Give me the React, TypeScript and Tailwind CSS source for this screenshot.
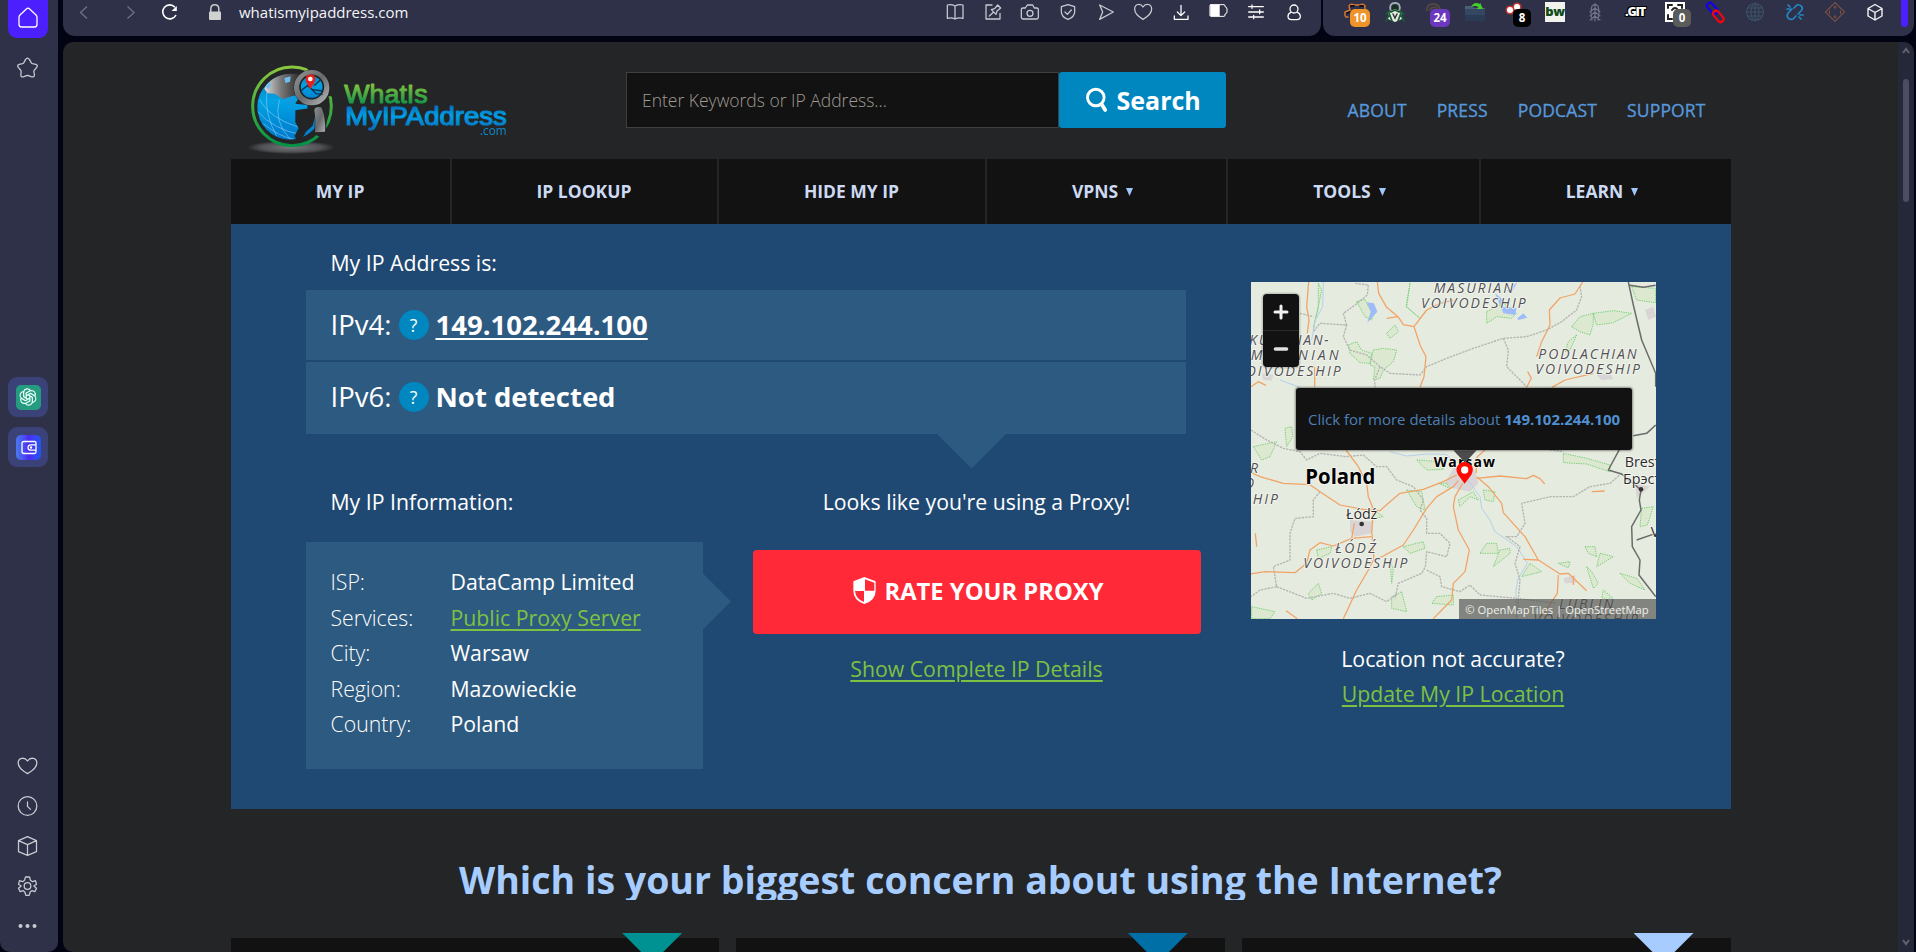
import type { ReactNode } from "react";
import { PiOpenAiLogo } from "react-icons/pi";

/* ---------- browser chrome ---------- */

function Glyph({ cx, cy, children, bright = false }: { cx: number; cy: number; children: ReactNode; bright?: boolean }) {
  return (
    <svg
      viewBox={`${cx - 36} ${cy - 36} 72 72`}
      className={bright ? "size-6 text-[#ffffff]" : "size-6 text-[#c9cbd2]"}
      fill="none"
      stroke="currentColor"
      strokeWidth="3.8"
      strokeLinecap="round"
      strokeLinejoin="round"
    >
      {children}
    </svg>
  );
}

const heartPath = "M0 23C-14 15-28 3-28-9-28-25-9-28 0-15 9-28 28-25 28-9 28 3 14 15 0 23Z";

function SideRail() {
  return (
    <aside className="flex w-[58px] shrink-0 flex-col items-center rounded-b-[10px] bg-[#2e3147]">
      <div className="flex h-[38px] w-10 -translate-x-px items-center justify-center rounded-b-[9px] bg-[#4c1fff]">
        <Glyph cx={0} cy={4} bright>
          <path d="M-20 28H20Q27 28 27 20V-1Q27-5 24-8L5-26Q0-31-5-26L-24-8Q-27-5-27-1V20Q-27 28-20 28Z" />
        </Glyph>
      </div>
      <div className="mt-[18px] flex h-6 w-10 -translate-x-[1.500px] items-center justify-center">
        <Glyph cx={0} cy={1}>
          <path d="M-6-24Q0-33 6-24L11-15Q12-13 15-12L25-10Q33-7 27 0L21 7Q19 9 19 12L21 22Q20 30 11 27L3 24Q0 23-3 24L-11 27Q-20 30-20 22L-19 12Q-19 9-21 7L-27 0Q-33-7-25-10L-15-12Q-12-13-11-15Z" />
        </Glyph>
      </div>
      <div className="mt-[297px] flex h-10 w-10 -translate-x-px items-center justify-center rounded-[9px] bg-[#3a4277]">
        <div className="flex size-[25px] items-center justify-center rounded-[5px] bg-[#259b80]">
          <PiOpenAiLogo className="size-5 text-[#e8fff8]" />
        </div>
      </div>
      <div className="mt-2.5 flex h-10 w-10 -translate-x-px items-center justify-center rounded-[9px] bg-[#3a4277]">
        <div className="flex size-[25px] items-center justify-center rounded-[5px] bg-linear-to-r from-[#4a78f0] via-[#4a2af0] to-[#1d55f5]">
          <svg viewBox="0 0 25 25" className="size-[25px]" fill="none" stroke="#fff" strokeWidth="1.3">
            <path d="M20 9.5V8Q20 6.500 18.500 6.500H8Q6 6.500 6 8.500V16.500Q6 18.500 8 18.500H18.500Q20 18.500 20 17V15.500M20 9.800H14.800Q12 9.800 12 12.500T14.800 15.200H20Z" />
            <circle cx="15" cy="12.500" r=".6" fill="#fff" />
          </svg>
        </div>
      </div>
      <div className="mt-[287px] flex -translate-x-[1.500px] flex-col gap-4">
        <Glyph cx={0} cy={0}><path d={heartPath} /></Glyph>
        <Glyph cx={0} cy={0}><circle r="28" /><path d="M0-12V1L9 10" /></Glyph>
        <Glyph cx={0} cy={0}><path d="M0-28 27-16V17L0 28-27 17V-16ZM-27-16 0-4 27-16M0-4V28" /></Glyph>
        <Glyph cx={0} cy={0}>
          <path d="M-6-27H6L9-17 15-13 24-16 27-5 19 0 27 7 22 17 13 14 8 18 5 28H-5L-8 18-13 14-22 17-27 7-19 0-27-5-24-16-15-13-9-17Z" />
          <circle r="10" />
        </Glyph>
        <Glyph cx={0} cy={0}>
          <g fill="currentColor" stroke="none"><circle cx="-21" r="6" /><circle r="6" /><circle cx="21" r="6" /></g>
        </Glyph>
      </div>
    </aside>
  );
}

function AddressBar() {
  return (
    <div className="flex h-9 w-[1258px] shrink-0 items-start rounded-b-[12px] bg-[#2e3147] font-['Open_Sans',sans-serif]">
      <svg viewBox="0 0 160 36" className="h-9 w-[160px] shrink-0" fill="none" strokeWidth="1.3">
        <path d="M24 6.500 17.500 12.500 24 18.500M64.500 6.500 71 12.500 64.500 18.500" stroke="#6f7286" />
        <path d="M113 15A7 7 0 1 1 112 7.200" stroke="#fff" strokeWidth="1.600" />
        <path d="M113.800 6V11H108.500Z" fill="#fff" />
        <path d="M147.800 12V9Q147.800 4.700 151.800 4.700T155.800 9V12" stroke="#c9cbc9" strokeWidth="1.500" />
        <rect x="146" y="11.500" width="12" height="8.500" rx="1" fill="#d0d2d0" />
      </svg>
      <div className="w-[713px] pl-4 text-[15px] leading-[25px] text-[#f4f4f8]">whatismyipaddress.com</div>
      <div className="grid w-[377px] grid-cols-10 justify-items-center">
        <Glyph cx={163} cy={34}><path d="M163 16Q152 10 140 13V53Q152 50 163 55 174 50 187 53V13Q174 10 163 16V55" /></Glyph>
        <Glyph cx={279} cy={34}><path d="M276 13H258V55H300V38M268 46 281 34M274 27 288 41 291 31 302 22 293 13 284 24Z" /></Glyph>
        <Glyph cx={392} cy={34}><path d="M366 26Q366 22 371 22H378L384 13H400L405 22H412Q417 22 417 26V50Q417 55 412 55H371Q366 55 366 50Z" /><circle cx="392" cy="38" r="9" /></Glyph>
        <Glyph cx={504} cy={34}><path d="M504 12 524 18V33Q524 48 504 56 484 48 484 33V18ZM495 34 502 41 514 28" /></Glyph>
        <Glyph cx={618} cy={34}><path d="M599 13 640 34 599 56 608 34Z" /></Glyph>
        <Glyph cx={728} cy={34}><path d="M728 56C714 48 703 36 703 25 703 9 721 7 728 19 735 7 754 9 754 25 754 36 742 48 728 56Z" /></Glyph>
        <Glyph cx={841} cy={34} bright><path d="M841 14V44M830 34 841 45 852 34M821 46V56H862V46" /></Glyph>
        <Glyph cx={952} cy={34} bright>
          <path d="M928 12H967Q970 12 970 16V18Q976 19 976 25V34Q976 39 970 40V43Q970 47 967 47H928Q925 47 925 43V16Q925 12 928 12Z" strokeWidth="3" />
          <path d="M927 13H953V46H927Z" fill="currentColor" strokeWidth="2" />
        </Glyph>
        <Glyph cx={1067} cy={34} bright><path d="M1045 18H1089M1045 34H1089M1045 49H1089M1055 13V23M1078 28V39M1060 44V54" /></Glyph>
        <Glyph cx={1178} cy={34} bright><circle cx="1178" cy="25" r="12" /><path d="M1169 35Q1160 38 1160 47 1160 57 1170 57H1187Q1197 57 1197 47 1197 38 1188 35" /></Glyph>
      </div>
    </div>
  );
}

function Ext({ children, badge, tone }: { children: ReactNode; badge?: string; tone?: string }) {
  return (
    <div className="relative h-7 w-10">
      <svg viewBox="0 0 40 28" className="h-7 w-10" fill="none" strokeLinecap="round">{children}</svg>
      {badge && (
        <span className={`absolute top-[9px] flex h-[18px] items-center justify-center rounded-[5px] text-[11.500px] font-bold leading-none text-white ${tone}`}>
          {badge}
        </span>
      )}
    </div>
  );
}

function ExtensionBar() {
  return (
    <div className="flex h-9 w-[591px] items-start rounded-b-[12px] bg-[#2e3147] pl-3 font-['Open_Sans',sans-serif]">
      <Ext badge="10" tone="left-[15px] w-5 bg-[#ef932b]">
        <path d="M10 16V12L15 10 14 6Q16 3 19 5H25Q28 3 30 6V9M11 17H13" stroke="#df7830" strokeWidth="1.400" />
        <path d="M16 6H19M25 6H28M12 13 15 12" stroke="#111" strokeWidth="1.800" />
      </Ext>
      <Ext>
        <path d="M15.500 10Q14 3 20 3T24.500 10" stroke="#a4b0b4" strokeWidth="1.800" />
        <path d="M16.500 9Q17 5 20 5T23.500 9L20 11Z" fill="#16321f" />
        <path d="M13 12 20 9 27 12V19L20 22 13 19Z" fill="#e4ece5" />
        <path d="M11 14 15 11M29 14 25 11M14 13 17 21M26 13 23 21M11 21 14 15M29 21 26 15M16 12 20 10 24 12" stroke="#1a5a35" strokeWidth="1.700" />
        <path d="M18 14 20 18 22 14" stroke="#333" strokeWidth="1.500" />
      </Ext>
      <Ext badge="24" tone="left-[15px] w-5 bg-[#6c38c0]">
        <path d="M12 10Q12 4 18 4T25 9M15 10Q17 6 22 8" stroke="#514744" strokeWidth="2" />
      </Ext>
      <Ext>
        <path d="M10 6H17L19 8H30V20H10Z" fill="#4b5f7c" />
        <path d="M10 9H30V21H10Z" fill="#344862" />
        <path d="M10 15H30V21H10Z" fill="#2a3b56" />
        <path d="M16 7Q19 1 25 4V2.500L28 9 21.500 9 23.500 7Q20 5 16 7Z" fill="#43cf28" />
      </Ext>
      <Ext badge="8" tone="left-[18px] w-[18px] bg-black">
        <circle cx="15" cy="10" r="4.500" fill="#e9352c" opacity=".8" /><circle cx="22" cy="7" r="4.500" fill="#e9352c" opacity=".8" />
        <circle cx="15" cy="10" r="3" fill="#fff" /><circle cx="22" cy="7" r="3" fill="#fff" />
      </Ext>
      <div className="flex h-7 w-10 items-start justify-center pt-0.5">
        <span className="flex size-5 items-center justify-center bg-[#f2f2ee] pb-0.5 text-[13px] font-extrabold leading-none tracking-tight text-[#0f4a18]">bw</span>
      </div>
      <Ext>
        <path d="M20 4V21M17 6Q15 12 17 20M23 6Q25 12 23 20M15 12 20 8 25 12M15 16 20 12 25 16M15 20 20 16 25 20M17 6 20 4 23 6" stroke="#72748a" strokeWidth="1.100" />
      </Ext>
      <div className="flex h-7 w-10 items-start justify-center pt-[5px] text-[12.500px] font-extrabold leading-[14px] tracking-[-1.200px] text-white [text-shadow:1px_1px_0_#000,-1px_-1px_0_#000,1px_-1px_0_#000,-1px_1px_0_#000]">.GIT</div>
      <Ext badge="0" tone="left-[18px] w-[18px] bg-[#5b5b5b]">
        <path d="M10 2H30V22H10Z" fill="#fff" />
        <path d="M13 8V5H17M23 5H27V8M13 15V19H17M17 10Q20 6 23 10" stroke="#222" strokeWidth="2" />
      </Ext>
      <Ext>
        <rect x="11" y="5" width="13" height="6" rx="3" transform="rotate(48 17 8)" stroke="#1200ee" strokeWidth="2.200" />
        <rect x="17" y="13" width="13" height="6" rx="3" transform="rotate(50 23 16)" stroke="#f00510" strokeWidth="2.200" />
      </Ext>
      <Ext>
        <g stroke="#3d5269" strokeWidth="1.100"><circle cx="20" cy="12" r="8.500" /><ellipse cx="20" cy="12" rx="4" ry="8.500" /><path d="M20 3V21M11.500 12H28.500M13 8H27M13 16H27" /></g>
      </Ext>
      <Ext>
        <path d="M19 8 22 5Q25 4 27 7 28 9 26 11L23 14M21 16 18 19Q15 20 13 18 11 15 14 12L17 9M13 5 15 7M12 9H15M26 19 24 17M28 15H25" stroke="#2488c8" strokeWidth="1.700" />
      </Ext>
      <Ext>
        <path d="M20 2.500 29.500 12 20 21.500 10.500 12Z" stroke="#74504a" strokeWidth="1.200" />
        <path d="M20 6V8.500M20 15.500V18M14.500 11V13.500M25.500 11V13.500M19 7H21M19 17H21" stroke="#84503f" strokeWidth="1.100" />
      </Ext>
      <Ext>
        <path d="M20 4.500 27 8.500V16L20 20 13 16V8.500ZM13 8.500 20 12.500 27 8.500M20 12.500V20" stroke="#f4f4f6" strokeWidth="1.400" strokeLinejoin="round" />
      </Ext>
      <div className="ml-[6px] h-[27px] w-[7px] rounded-b-[4px] bg-[#4c1fff]" />
    </div>
  );
}

function ScrollTrack() {
  return (
    <div className="flex w-4 shrink-0 flex-col items-center justify-between rounded-tr-[10px] bg-[#242839] pb-1.5 pt-[5px]">
      <svg viewBox="0 0 10 8" className="h-2 w-2.5" fill="none" stroke="#62636f" strokeWidth="2"><path d="M2 6 5 2 8 6" /></svg>
      <div className="mt-6 h-[123px] w-1.5 rounded-full bg-[#4c4c65]" />
      <div className="grow" />
      <svg viewBox="0 0 10 8" className="h-2 w-2.5" fill="none" stroke="#62636f" strokeWidth="2"><path d="M2 2 5 6 8 2" /></svg>
    </div>
  );
}

/* ---------- site header ---------- */

function Logo() {
  return (
    <svg viewBox="48 40 792 282" className="h-[94px] w-[264px] shrink-0" fontFamily="Liberation Sans, Arial, sans-serif">
      <defs>
        <linearGradient id="lime" x1="0" y1="0" x2="0" y2="1"><stop offset="0" stopColor="#8cc63f" /><stop offset="1" stopColor="#009245" /></linearGradient>
        <linearGradient id="limeText" gradientUnits="userSpaceOnUse" x1="0" y1="100" x2="0" y2="164"><stop offset="0" stopColor="#8cc63f" /><stop offset="1" stopColor="#109447" /></linearGradient>
        <linearGradient id="blueText" gradientUnits="userSpaceOnUse" x1="0" y1="166" x2="0" y2="244"><stop offset="0" stopColor="#0a6ab8" /><stop offset=".42" stopColor="#00a0e6" /><stop offset="1" stopColor="#0968b4" /></linearGradient>
        <linearGradient id="sea" x1="0" y1="0" x2="0" y2="1"><stop offset="0" stopColor="#1474b8" /><stop offset=".4" stopColor="#00a3e4" /><stop offset="1" stopColor="#0078cc" /></linearGradient>
        <linearGradient id="steel" x1="0" y1="0" x2="1" y2="1"><stop offset="0" stopColor="#8c8e90" /><stop offset=".5" stopColor="#68696c" /><stop offset="1" stopColor="#b0b1b3" /></linearGradient>
        <linearGradient id="land" x1="0" y1="0" x2="1" y2="0"><stop offset="0" stopColor="#dadada" /><stop offset=".45" stopColor="#777" /><stop offset="1" stopColor="#252525" /></linearGradient>
        <radialGradient id="shade"><stop offset="0" stopColor="#77787b" /><stop offset=".7" stopColor="#4e5053" /><stop offset="1" stopColor="#232526" /></radialGradient>
      </defs>
      <ellipse cx="183" cy="293" rx="132" ry="20" fill="url(#shade)" />
      <circle cx="186" cy="170" r="118" fill="#232526" stroke="url(#lime)" strokeWidth="9" />
      <circle cx="180" cy="172" r="98" fill="url(#sea)" />
      <g fill="none" stroke="#8fd3f3" strokeWidth="2.500" opacity=".7">
        <path d="M88 150Q120 206 204 232M83 185Q130 240 215 255M110 130Q105 200 140 258M148 150Q130 215 180 268M100 222Q150 262 190 268" />
      </g>
      <path d="M103 117Q124 76 180 72L215 74 210 132 188 140Q165 156 150 143L134 132 112 131Z" fill="url(#land)" />
      <path d="M163 85 182 80 180 96 166 100ZM108 112 120 96 124 106 116 118Z" fill="#6fbdf0" />
      <path d="M165 146 190 138 204 152 190 158 208 168 198 174 165 156Z" fill="#0d9ce0" />
      <path d="M196 182 238 176Q258 176 257 192L248 228 228 246 216 268 200 274 194 258 206 236 196 218Z" fill="#222426" />
      <path d="M233 182H254V252L286 248 294 184 284 138 250 160 208 142 196 162 232 166Z" fill="#232526" />
      <path d="M228 50 252 56 302 118 308 140 286 140Z" fill="#232526" />
      <path d="M248 250 288 232 304 246 276 266Z" fill="#232526" />
      <path d="M255 175Q266 170 275 174Q288 208 285 246L255 248Q258 210 253 182Z" fill="url(#steel)" />
      <circle cx="245" cy="114" r="54" fill="#232526" />
      <circle cx="245" cy="114" r="44" fill="url(#sea)" stroke="url(#steel)" strokeWidth="18" />
      <circle cx="245" cy="112" r="35" fill="none" stroke="#202326" strokeWidth="5" />
      <path d="M212 124 232 108 248 120 278 124M238 112 258 132 278 134M252 108 272 90" fill="none" stroke="#12344c" strokeWidth="4" />
      <path d="M241 74Q257 75 256 91 253 102 241 118 229 102 227 91 226 75 241 74Z" fill="#e3231c" />
      <circle cx="241" cy="88" r="7" fill="#fff" />
      <text x="343" y="160" fontSize="79" textLength="250" lengthAdjust="spacingAndGlyphs" fill="url(#limeText)" stroke="url(#limeText)" strokeWidth="3" strokeLinejoin="round">WhatIs</text>
      <text x="346" y="226" fontSize="77" textLength="484" lengthAdjust="spacingAndGlyphs" fill="url(#blueText)" stroke="url(#blueText)" strokeWidth="3.500" strokeLinejoin="round">MyIPAddress</text>
      <text x="750" y="257" fontFamily="Open Sans, sans-serif" fontSize="37" textLength="80" lengthAdjust="spacingAndGlyphs" fill="#1286c8">.com</text>
    </svg>
  );
}

function SiteHeader() {
  return (
    <header className="flex h-[117px] items-start pl-[15px]">
      <div className="pt-[21px]"><Logo /></div>
      <div className="ml-[116px] mt-[30px] flex h-14 w-[600px]">
        <div className="flex w-[433px] items-center border border-[#3d3f41] bg-[#121212] pl-[15.500px] text-[17.500px] font-light text-[#a09b93]">Enter Keywords or IP Address...</div>
        <div className="flex grow items-center rounded-[3px] bg-[#0087bf] pl-[26px] text-[25px] font-bold leading-none text-white">
          <svg viewBox="0 0 24 26" className="mr-2 h-[26px] w-6" fill="none" stroke="#fff" strokeLinecap="round"><circle cx="10.800" cy="10.500" r="8.300" strokeWidth="2.900" /><path d="M16.800 17.500 20.200 23" strokeWidth="3.800" /></svg>
          Search
        </div>
      </div>
      <div className="ml-[122px] mt-[54px] flex gap-[30px] text-[17.500px] font-medium leading-7 tracking-[0.160px] text-[#5797dc] [-webkit-text-stroke:0.350px_#5797dc]">
        <span>ABOUT</span><span>PRESS</span><span>PODCAST</span><span>SUPPORT</span>
      </div>
    </header>
  );
}

const menu = [
  { label: "MY IP", more: false },
  { label: "IP LOOKUP", more: false },
  { label: "HIDE MY IP", more: false },
  { label: "VPNS", more: true },
  { label: "TOOLS", more: true },
  { label: "LEARN", more: true },
];

function MainMenu() {
  return (
    <nav className="grid h-[65px] grid-cols-[219px_265px_266px_239px_251px_250px] gap-0.5">
      {menu.map((m) => (
        <div key={m.label} className={`flex items-center justify-center gap-2 bg-[#121212] text-[17.500px] font-bold text-[#cddaf3] ${m.more ? "pr-[7px]" : ""}`}>
          {m.label}
          {m.more && <svg viewBox="0 0 7 8" className="h-2 w-[7px]"><path d="M0 0H7L3.500 8Z" fill="#a1c6fa" /></svg>}
        </div>
      ))}
    </nav>
  );
}

/* ---------- map ---------- */

const roads = [
  "M206 36 200 110 207 150 202 190M224 290V350M412 36 416 70 440 112 474 140 490 164 522 170 560 120 600 100 640 90M440 145 474 140M522 170 540 225 558 260 552 320 540 352",
  "M1028 36 1005 72 960 84 928 120 930 165 905 215 890 260M863 305 874 325 860 352M936 352 975 330 1060 310M33 350 55 335 78 346",
  "M33 608 60 620 130 640 210 644 240 665 300 705 370 718 420 722 450 695 480 670 550 658 610 635 650 615",
  "M318 540 355 590 380 640 385 680 400 718 395 790M33 912 75 905 165 908 200 880 210 840 240 818 280 828 335 805 395 800M335 805 343 760",
  "M655 632 640 650 590 680 560 715 520 780 490 825 430 858 400 870 385 900 350 960 310 1046M402 870 396 790",
  "M668 640 645 680 640 710 655 780 688 840 675 905 640 940 635 990 580 1046",
  "M710 620 745 650 785 700 790 728 855 800 895 870 960 912 985 910 1040 962M850 868 895 870M955 915 952 970 900 1046M1000 918V945",
  "M710 625 780 618 860 626 880 616 900 626 914 642M708 610 712 560 735 540M1055 665 1094 663M46 790 50 830M138 1022 172 1046",
];
const voivodeships = [
  "M346 40 385 45 382 75 345 105 310 130 320 165 240 160 220 185M180 130 220 140M320 165 310 200 330 240 380 255 420 290 450 310 540 315 560 290 620 265 700 235 790 205 860 200 920 180 965 155 1010 120 1025 80 1020 50",
  "M790 205 805 240 800 290 830 320 860 350M420 290 404 330 405 352M33 480 80 510 130 535 180 545 200 570 240 550 320 560 370 555 410 590 440 590 470 630 520 650 550 690 540 720 560 745 560 790 600 790 630 820 620 860 560 845 556 890 545 910 475 940 465 985",
  "M240 665 220 690 220 740 165 745 150 790 150 870 100 890 110 950 60 960 33 980M110 950 200 985 280 970 330 985 390 970 440 995 475 970M560 900 600 920 605 950 660 965 690 945 720 975 830 985 950 1000",
  "M1145 610 1110 640 1050 650 1000 680 930 680 845 700 855 760 830 800 800 800 840 830 825 880 840 930 830 1046M870 530 970 545",
];
const forests = [
  "M350 95 375 88 385 110 402 130 395 150 375 140ZM440 190 465 165 475 185 450 205ZM325 225 350 215 365 240 395 250 390 280 360 278 330 250ZM400 240 430 235 470 240 460 275 430 300 420 325 400 330 405 290 390 285Z",
  "M740 125 790 100 830 130 815 145 770 140 740 160ZM995 170 1020 140 1060 130 1060 160 1050 195 1020 185ZM975 245 985 215 1010 195 990 240ZM1060 130 1120 122 1175 130 1120 158 1070 165ZM1175 50 1247 55V98L1190 90Z",
  "M40 530 110 515 90 560 65 570ZM135 475 155 470 158 500 140 530ZM530 570 600 575 610 598 560 600ZM595 640 620 640 630 655ZM655 690 700 665 715 690 690 680 660 710ZM730 660 765 665 760 695 735 690ZM500 660 545 665 555 720 530 710Z",
  "M970 550 1040 565 1110 585 1110 605 1040 582 970 578ZM490 830 550 815 555 835 510 850ZM720 850 740 820 770 820 775 850 750 850ZM780 840 810 835 810 850 760 890ZM230 840 275 830 270 850 235 865ZM410 725 430 740 400 745Z",
  "M1035 830 1065 830 1070 860 1045 850ZM1080 850 1120 860 1070 890ZM955 880 990 875 985 893ZM1040 890 1055 905 1075 940 1060 955ZM1140 910 1190 925 1215 960 1170 940ZM1090 960 1120 985 1085 985ZM870 880 905 905 845 920Z",
  "M205 970 235 940 245 970 215 990ZM35 1010 105 1025 90 1046 35 1046ZM455 980 485 965 500 1025 455 1015ZM590 980 640 975 640 1005 575 1000ZM1205 715 1240 710 1222 765 1200 770ZM450 870 460 900 455 940ZM235 40 245 60 235 110 220 175 235 110ZM510 40 500 110 540 145 498 110Z",
];

function MapCanvas() {
  return (
    <svg viewBox="33 36 1215 1011" className="h-[337px] w-[405px]" fontFamily="Open Sans, Noto Sans, sans-serif">
      <path d="M33 36H1248V1047H33Z" fill="#e6ebdf" />
      <g fill="#d9d5d6">
        <path d="M615 640 640 595 700 590 715 640 690 665 640 655ZM330 750 400 755 395 790 345 800 330 785Z" />
        <path d="M1215 120 1240 110 1248 140 1225 150ZM1070 315 1110 310 1120 328 1085 330ZM970 925 1005 915 1008 938 975 940ZM65 310 100 315 95 332 70 330ZM1185 640 1230 650 1190 685Z" />
      </g>
      <g fill="#dce9d0" stroke="#78d078" strokeWidth="3" strokeDasharray="4 3">{forests.map((d) => <path key={d} d={d} />)}</g>
      <path d="M380 97 402 100 412 125 382 158 392 125ZM765 70 790 90 782 110 830 115 825 135 790 130 780 105ZM800 62 832 36 815 68ZM832 145 850 130 862 143 835 150Z" fill="#9dbcf8" />
      <path d="M250 36 248 110 226 150 215 210M120 330 180 352M450 545 500 558 560 552 620 553 690 640 720 680 725 715 750 750 765 785 830 830 862 880 835 925 828 960V1046" fill="none" stroke="#b3d1ea" strokeWidth="3" />
      <g fill="none" stroke="#b3b5b1" strokeWidth="4" strokeDasharray="7 3">{voivodeships.map((d) => <path key={d} d={d} />)}</g>
      <g fill="none" stroke="#f1a366" strokeWidth="3.800" strokeLinejoin="round">{roads.map((d) => <path key={d} d={d} />)}</g>
      <path d="M1165 36 1180 105 1205 210 1247 310V350M1165 45 1210 52 1247 46M1247 465 1220 490 1180 497M1140 535 1105 600 1145 612 1180 640 1203 660 1198 690 1203 720 1175 770 1177 830 1200 870 1197 915 1247 980M1190 810 1247 790" fill="none" stroke="#6a6c6a" strokeWidth="4.500" strokeLinejoin="round" />
      <g fill="#505256" stroke="#f5f5ef" strokeWidth="5" paintOrder="stroke" strokeLinejoin="round" fontStyle="italic" fontSize="42">
        <text x="581" y="68" textLength="238">MASURIAN</text>
        <text x="543" y="114" textLength="314">VOIVODESHIP</text>
        <text x="895" y="266" textLength="295">PODLACHIAN</text>
        <text x="886" y="312" textLength="314">VOIVODESHIP</text>
        <text x="28" y="224" textLength="238">KUYAVIAN-</text>
        <text x="-40" y="271" textLength="336">POMERANIAN</text>
        <text x="-12" y="317" textLength="314">VOIVODESHIP</text>
        <text x="30" y="609">R</text>
        <text x="12" y="655">O</text>
        <text x="38" y="702" textLength="76">HIP</text>
        <text x="286" y="848" textLength="121">ŁÓDŹ</text>
        <text x="190" y="894" textLength="312">VOIVODESHIP</text>
        <text x="957" y="1016" textLength="163">LUBLIN</text>
        <text x="880" y="1063" textLength="314">VOIVODESHIP</text>
      </g>
      <g fill="#2b2b2b" stroke="#f7f7f2" strokeWidth="5" paintOrder="stroke" strokeLinejoin="round" fontSize="43">
        <text x="318" y="747" textLength="94">Łódź</text>
        <text x="1154" y="591">Brest</text>
        <text x="1149" y="643">Брэст</text>
        <text x="1232" y="800">V</text>
        <text x="581" y="592" fontSize="42" fontWeight="700" fill="#000" textLength="184">Warsaw</text>
        <text x="196" y="642" fontSize="63" fontWeight="700" fill="#000" textLength="210" lengthAdjust="spacingAndGlyphs">Poland</text>
      </g>
      <circle cx="365" cy="762" r="7" fill="#333" />
      <circle cx="1203" cy="658" r="7" fill="#333" />
      <path d="M640 541H710L675 578Z" fill="#4c4c4c" />
      <path d="M674 641 654 614Q646 600 652 589 660 576 674 576T696 589Q702 600 694 614Z" fill="#ff0800" />
      <circle cx="674" cy="600" r="11" fill="#fff" />
    </svg>
  );
}

function LocationMap() {
  return (
    <div className="relative h-[337px] overflow-hidden">
      <MapCanvas />
      <div className="absolute left-3 top-3 w-9 divide-y divide-[#2b2b2b] rounded-[4px] bg-[#121212] shadow-[0_0_0_1.500px_rgba(0,0,0,0.15)]">
        <svg viewBox="0 0 36 36" className="block h-[37px] w-9"><path d="M18 12V24M12 18H24" stroke="#f1f0ee" strokeWidth="3" strokeLinecap="round" /></svg>
        <svg viewBox="0 0 36 36" className="block h-9 w-9"><path d="M12.500 18H23.500" stroke="#e3e1dd" strokeWidth="3.600" strokeLinecap="round" /></svg>
      </div>
      <div className="absolute left-[45.500px] top-[106px] flex h-[62px] w-[336px] items-center justify-center whitespace-pre rounded-[3px] bg-[#121212] text-[15px] text-[#4c7fb6] shadow-[0_0_2px_1px_rgba(0,0,0,0.4)]">
        Click for more details about <b className="text-[#5090d2]">149.102.244.100</b>
      </div>
      <div className="absolute bottom-0 right-0 flex h-5 w-[197px] items-center justify-center whitespace-pre bg-[#4d4f4c]/65 text-[11.250px] text-[#f0f0ec]">© OpenMapTiles | OpenStreetMap</div>
    </div>
  );
}

/* ---------- IP panel ---------- */

function HelpDot() {
  return <span className="mb-[3px] mt-1.5 flex size-[30px] items-center justify-center rounded-full bg-[#0087bf] pt-px text-[17.500px] leading-none">?</span>;
}

const details = [
  { name: "ISP:", value: "DataCamp Limited", link: false },
  { name: "Services:", value: "Public Proxy Server", link: true },
  { name: "City:", value: "Warsaw", link: false },
  { name: "Region:", value: "Mazowieckie", link: false },
  { name: "Country:", value: "Poland", link: false },
];

function IpPanel() {
  return (
    <section className="flex h-[585px] gap-[50px] bg-[#1f4973] pl-[75px] text-[21.250px] text-white">
      <div className="w-[895px] pt-3">
        <div className="h-[54px] pl-[25px] leading-[53px]">My IP Address is:</div>
        <div className="w-[880px] text-[27.500px]">
          <div className="flex h-[70px] bg-[#2d5a80] pl-[25px] leading-[70px]">
            <span className="w-[68px]">IPv4:</span>
            <span className="pr-[7px] pt-[14px]"><HelpDot /></span>
            <b className="font-bold underline decoration-2 underline-offset-[3px]">149.102.244.100</b>
          </div>
          <div className="relative mt-0.5 flex h-[72px] bg-[#2d5a80] pl-[25px] leading-[70px]">
            <span className="w-[68px]">IPv6:</span>
            <span className="pr-[7px] pt-[14px]"><HelpDot /></span>
            <b className="font-bold">Not detected</b>
            <div className="absolute left-[631.500px] top-full h-[34.500px] w-[69px] bg-[#2d5a80] [clip-path:polygon(0_0,100%_0,50%_100%)]" />
          </div>
        </div>
        <div className="mt-[47px] flex gap-[50px]">
          <div className="w-[397px]">
            <div className="h-[41px] pl-[25px] leading-[41px]">My IP Information:</div>
            <div className="relative mt-5 h-[227px] bg-[#2d5a80] pl-[25px] pt-[22.400px]">
              {details.map((d) => (
                <div key={d.name} className="flex leading-[35.400px]">
                  <span className="w-[120px] font-light">{d.name}</span>
                  <span className={d.link ? "text-[#7dc142] underline decoration-2 underline-offset-[3px]" : ""}>{d.value}</span>
                </div>
              ))}
              <div className="absolute left-full top-[31px] h-[57px] w-[28.500px] bg-[#2d5a80] [clip-path:polygon(0_0,100%_50%,0_100%)]" />
            </div>
          </div>
          <div className="flex w-[448px] flex-col items-center">
            <div className="h-[41px] leading-[41px]">Looks like you're using a Proxy!</div>
            <div className="mt-7 flex h-[84px] w-full items-center justify-center gap-[9px] rounded-[4px] bg-[#ff2938] pl-[3px] text-[23.750px] font-bold">
              <svg viewBox="370 471 69 82" className="h-[27.300px] w-[23px] -translate-y-px"><path d="M404 471 438 484V512Q438 541 404 552 371 541 371 512V484Z" fill="#fff" /><path d="M406 478 434 488V512H406ZM376 513H403V546Q378 537 376 513Z" fill="#ff2938" /></svg>
              RATE YOUR PROXY
            </div>
            <div className="leading-[69px] text-[#7dc142] underline decoration-2 underline-offset-[3px]">Show Complete IP Details</div>
          </div>
        </div>
      </div>
      <div className="w-[405px] pt-[58px] text-center leading-[35px]">
        <LocationMap />
        <div className="mt-[22px]">Location not accurate?</div>
        <div className="text-[#7dc142] underline decoration-2 underline-offset-[3px]">Update My IP Location</div>
      </div>
    </section>
  );
}

const cards = ["bg-[#009193]", "bg-[#006fa6]", "bg-[#a7ccff]"];

export default function App() {
  return (
    <div className="flex h-[952px] w-[1916px] gap-[5px] overflow-hidden bg-[#020413]">
      <SideRail />
      <div className="flex min-w-0 grow flex-col gap-1.5">
        <div className="flex gap-0.5">
          <AddressBar />
          <ExtensionBar />
        </div>
        <div className="flex min-h-0 grow">
          <main className="w-[1835px] overflow-hidden rounded-l-[10px] bg-[#232526] font-['Open_Sans',sans-serif]">
            <div className="mx-auto w-[1500px]">
              <SiteHeader />
              <MainMenu />
              <IpPanel />
              <h2 className="mt-[50px] h-[41px] overflow-hidden text-center text-[37.500px] font-bold leading-[41px] text-[#a7ccff]">Which is your biggest concern about using the Internet?</h2>
              <div className="mt-[38px] flex gap-[17px]">
                {cards.map((c) => (
                  <div key={c} className="relative h-24 w-[488.700px] bg-[#121212]">
                    <div className={`absolute -top-[5px] right-[37px] h-[30px] w-[60px] [clip-path:polygon(0_0,100%_0,50%_100%)] ${c}`} />
                  </div>
                ))}
              </div>
            </div>
          </main>
          <ScrollTrack />
        </div>
      </div>
    </div>
  );
}
